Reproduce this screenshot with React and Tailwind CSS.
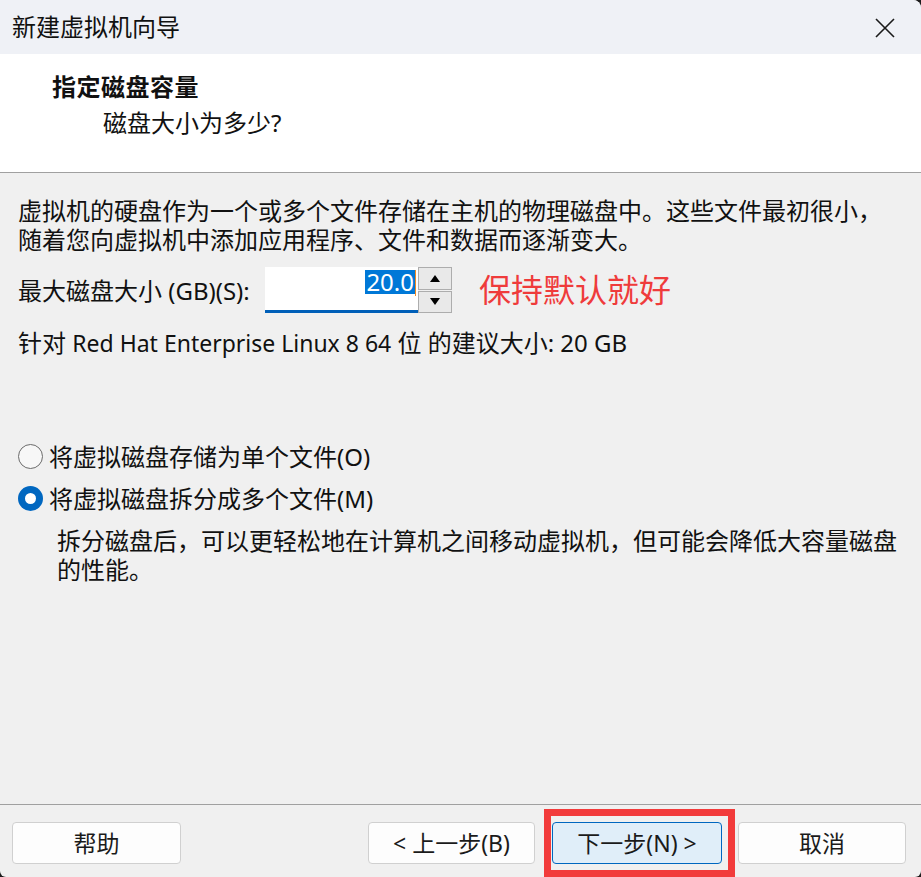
import React from "react";

const font = { fontFamily: '"Noto Sans", "Noto Sans CJK SC", sans-serif' };

function Btn({ children, primary, className = "" }) {
  return (
    <div
      className={
        "h-[42px] flex items-center justify-center rounded-[4px] border text-[23px] text-[#1a1a1a] " +
        (primary ? "bg-[#e0eef9] border-[#0067c0] " : "bg-[#fdfdfd] border-[#d0d0d0] ") +
        className
      }
    >
      {children}
    </div>
  );
}

export default function App() {
  return (
    <div className="w-[921px] h-[877px] bg-[#1c1c1c]" style={font}>
      <div className="relative w-full h-full flex flex-col bg-[#f0f0f0] rounded-tr-[8px] rounded-br-[6px] rounded-bl-[6px] overflow-hidden">
        {/* title bar */}
        <div className="h-[54px] flex items-center justify-between bg-[#eff1f6] pl-[12px] pr-[25px]">
          <span className="text-[24px] text-[#111] leading-none">新建虚拟机向导</span>
          <svg width="22" height="22" viewBox="0 0 22 22" className="mt-[1px]">
            <path d="M2 2 L20 20 M20 2 L2 20" stroke="#1a1a1a" strokeWidth="1.6" />
          </svg>
        </div>
        {/* header */}
        <div className="h-[119px] bg-white border-b border-[#a0a0a0] pl-[52px] pt-[18px]">
          <div className="text-[24px] font-bold text-[#111] leading-[30px] tracking-[0.5px]">指定磁盘容量</div>
          <div className="text-[24px] text-[#111] leading-[30px] pl-[51px] mt-[6px]">磁盘大小为多少?</div>
        </div>
        {/* body */}
        <div className="flex-1 flex flex-col pl-[18px] pt-[23px] text-[24px] text-[#111] leading-[29px]">
          <div>
            虚拟机的硬盘作为一个或多个文件存储在主机的物理磁盘中。这些文件最初很小，
            <br />
            随着您向虚拟机中添加应用程序、文件和数据而逐渐变大。
          </div>
          <div className="flex items-center mt-[13px] h-[46px]">
            <span className="w-[247px] whitespace-nowrap">最大磁盘大小 (GB)(S):</span>
            <div className="w-[153px] h-[46px] bg-white border-b-[3px] border-[#005fb8] flex items-start justify-end pt-[3px]">
              <span className="bg-[#0078d7] text-white leading-[24px] text-[24px] px-[1px]">20.0</span>
              <span className="w-[1px] h-[26px] bg-[#f08a24] mr-[2px]"></span>
            </div>
            <div className="w-[34px] h-[46px] flex flex-col gap-[1px]">
              <div className="flex-1 bg-[#e9e9e9] border border-[#adadad] flex items-center justify-center">
                <svg width="10" height="7" viewBox="0 0 10 7"><path d="M0 7 L5 0 L10 7 Z" fill="#000" /></svg>
              </div>
              <div className="flex-1 bg-[#e9e9e9] border border-[#adadad] flex items-center justify-center">
                <svg width="10" height="7" viewBox="0 0 10 7"><path d="M0 0 L5 7 L10 0 Z" fill="#000" /></svg>
              </div>
            </div>
            <span className="ml-[27px] text-[32px] text-[#ef3b3b] leading-[36px]">保持默认就好</span>
          </div>
          <div className="mt-[15px]">
            针对 <span className="text-[23px]">Red Hat Enterprise Linux 8 64</span> 位 的建议大小: 20 GB
          </div>

          <div className="mt-[84px] flex items-center">
            <span className="w-[25px] h-[25px] rounded-full border-[1.5px] border-[#6b6b6b] bg-[#f7f7f7]"></span>
            <span className="ml-[6px]">将虚拟磁盘存储为单个文件(O)</span>
          </div>
          <div className="mt-[13px] flex items-center">
            <span className="w-[25px] h-[25px] rounded-full bg-[#0067c0] flex items-center justify-center">
              <span className="w-[11px] h-[11px] rounded-full bg-white"></span>
            </span>
            <span className="ml-[6px]">将虚拟磁盘拆分成多个文件(M)</span>
          </div>
          <div className="mt-[13px] pl-[39px]">
            拆分磁盘后，可以更轻松地在计算机之间移动虚拟机，但可能会降低大容量磁盘
            <br />
            的性能。
          </div>
        </div>
        {/* footer */}
        <div className="h-[73px] border-t border-[#a0a0a0] flex items-start pt-[17px] pl-[12px]">
          <Btn className="w-[169px]">帮助</Btn>
          <Btn className="w-[167px] ml-[187px]">&lt;&nbsp;上一步(B)</Btn>
          <Btn primary className="w-[170px] ml-[17px]">下一步(N)&nbsp;&gt;</Btn>
          <Btn className="w-[168px] ml-[16px]">取消</Btn>
        </div>
        <div className="absolute left-[544px] top-[809px] w-[191px] h-[68px] border-[7px] border-[#f23b3b]"></div>
      </div>
    </div>
  );
}
